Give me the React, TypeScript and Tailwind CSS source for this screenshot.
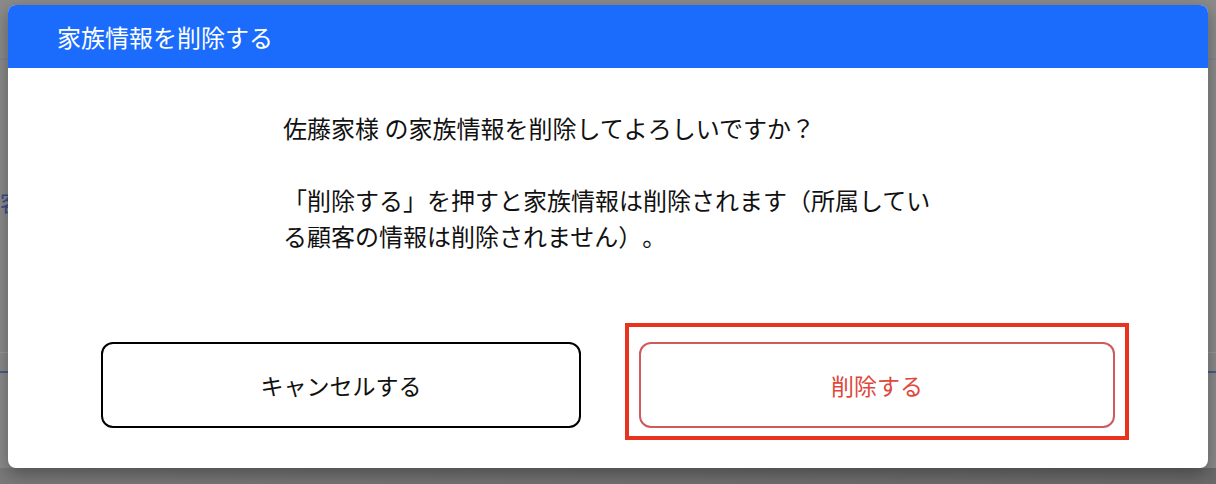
const font = { fontFamily: '"Noto Sans CJK JP", "Noto Sans", sans-serif' };

const BackgroundPage = () => (
  <div className="absolute inset-0 flex flex-col bg-[#8b8b8b]">
    <div className="mt-[58px] h-[2px] w-full bg-[#7f8796]" />
    <div className="mt-[130px] pl-0 text-[22px] leading-none text-[#3b4d8a]">客</div>
    <div className="mt-[140px] h-px w-full bg-[#9a9a9a]" />
    <div className="mt-[18px] h-[2px] w-full bg-[#4d5c86]" />
    <div className="mt-auto h-[16px] w-full bg-gradient-to-r from-[#7a7a7a] to-[#6a6a6a]" />
  </div>
);

export default function App() {
  return (
    <div className="relative h-[484px] w-full overflow-hidden [text-spacing-trim:space-all]" style={font}>
      <BackgroundPage />

      <div className="absolute left-2 top-[5px] flex h-[463px] w-[1200px] flex-col overflow-hidden rounded-lg bg-white shadow-[0_6px_18px_rgba(0,0,0,0.35)]">
        <div className="flex h-[63px] items-center bg-[#1b6cfd] pl-[49px] text-[24px] text-white">
          家族情報を削除する
        </div>

        <div className="mx-auto mt-[42px] w-[650px] text-[24px] leading-[36px] text-[#111]">
          <p>佐藤家様 の家族情報を削除してよろしいですか？</p>
          <p className="mt-[36px]">
            「削除する」を押すと家族情報は削除されます（所属してい
            <br />
            る顧客の情報は削除されません）。
          </p>
        </div>

        <div className="mt-auto flex gap-[58px] px-[93px] pb-[40px]">
          <button className="flex h-[86px] flex-1 items-center justify-center rounded-xl border-2 border-black bg-white text-[23px] text-[#111]">
            キャンセルする
          </button>
          <div className="relative flex-1">
            <button className="flex h-[86px] w-full items-center justify-center rounded-xl border-2 border-[#cf5a5c] bg-white text-[23px] text-[#e0473c]">
              削除する
            </button>
            <div className="pointer-events-none absolute -bottom-[12px] -left-[14px] -right-[14px] -top-[19px] border-4 border-[#e8341f]" />
          </div>
        </div>
      </div>
    </div>
  );
}
